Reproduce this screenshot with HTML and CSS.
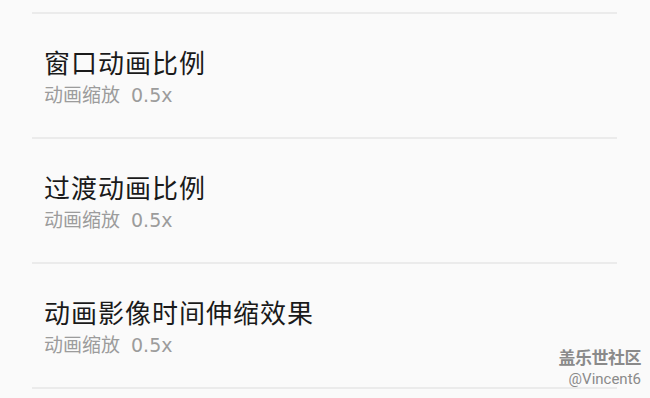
FILE: index.html
```html
<!DOCTYPE html>
<html lang="zh-Hans">
<head>
    <meta charset="UTF-8">
    <meta name="viewport" content="width=device-width, initial-scale=1.0">
    <title>动画设置</title>
    <link rel="stylesheet" href="styles.css">
</head>
<body>
<!-- 动画列表 -->
<main class="list">
    <section class="item">
        <h2 class="title">窗口动画比例</h2>
        <p class="sub">动画缩放<span class="num">0.5x</span></p>
    </section>
    <section class="item">
        <h2 class="title">过渡动画比例</h2>
        <p class="sub">动画缩放<span class="num">0.5x</span></p>
    </section>
    <section class="item">
        <h2 class="title">动画影像时间伸缩效果</h2>
        <p class="sub">动画缩放<span class="num">0.5x</span></p>
    </section>
    <div class="item last"></div>
</main>
<!-- 水印 -->
<div class="mark">
    <span class="mark-name">盖乐世社区</span>
    <span class="mark-user">@Vincent6</span>
</div>
</body>
</html>
```

FILE: styles.css
```css
* { margin: 0; padding: 0; box-sizing: border-box; }
html, body { width: 100%; height: 100%; }
body {
    background: #fafafa;
    font-family: "Noto Sans CJK SC", "Noto Sans", sans-serif;
    overflow: hidden;
    position: relative;
    padding-top: 12px;
}

/* 列表 */
.list {
    margin: 0 33px 0 32px;
}
.list > .item {
    height: 125px;
    border-top: 2px solid #ebebeb;
    padding: 32px 0 0 12px;
}
.list > .last {
    height: 2px;
    padding: 0;
}
.item > .title {
    font-size: 26px;
    font-weight: 400;
    line-height: 32px;
    color: #1a1a1a;
    letter-spacing: 1px;
}
.item > .sub {
    margin-top: 4px;
    font-size: 19px;
    line-height: 24px;
    color: #9c9c9c;
}
.sub > .num {
    margin-left: 11px;
    font-family: "DejaVu Sans", sans-serif;
    font-size: 19px;
}

/* 水印 */
.mark {
    position: absolute;
    right: 9px;
    top: 344px;
    display: flex;
    flex-direction: column;
    align-items: flex-end;
    color: #8a8a8a;
}
.mark-name {
    font-size: 17px;
    font-weight: 700;
    line-height: 25px;
    letter-spacing: -0.5px;
}
.mark-user {
    font-family: "Roboto", sans-serif;
    font-size: 15px;
    line-height: 20px;
}
```
